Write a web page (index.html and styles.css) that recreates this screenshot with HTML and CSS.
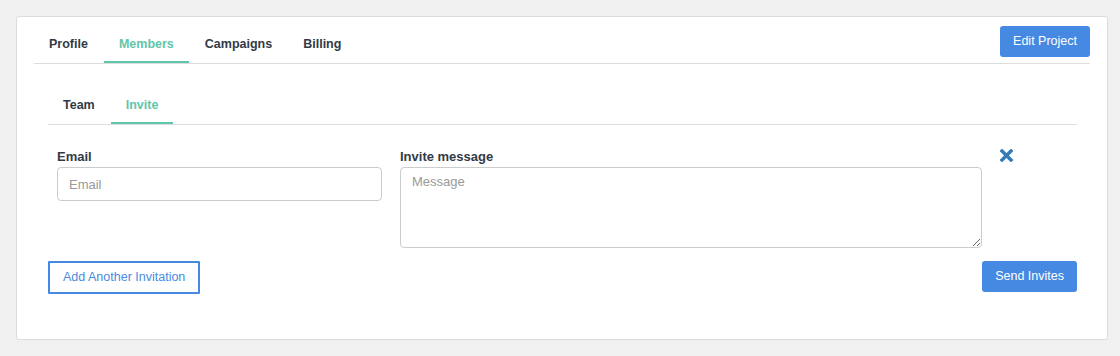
FILE: index.html
```html
<!DOCTYPE html>
<html>
<head>
<title>Project Members</title>
<link rel="stylesheet" href="styles.css">
</head>
<body>

<div class="card">
  <div class="card-head">
    <ul class="tabs">
      <li class="tab">Profile</li>
      <li class="tab active">Members</li>
      <li class="tab">Campaigns</li>
      <li class="tab">Billing</li>
    </ul>
    <button class="btn btn-primary">Edit Project</button>
  </div>

  <div class="section">
    <ul class="tabs sub-tabs">
      <li class="tab">Team</li>
      <li class="tab active">Invite</li>
    </ul>

    <div class="invite-row">
      <div class="field">
        <label for="email">Email</label>
        <input id="email" class="input" type="text" placeholder="Email">
      </div>
      <div class="field">
        <label for="message">Invite message</label>
        <textarea id="message" class="input textarea" placeholder="Message"></textarea>
      </div>
      <a class="remove" href="#" title="Remove">
        <svg width="13" height="13" viewBox="0 0 13 13"><path d="M2 2 L11 11 M11 2 L2 11" stroke="#337ab7" stroke-width="3.4" stroke-linecap="square" fill="none"/></svg>
      </a>
    </div>

    <div class="actions">
      <button class="btn btn-outline">Add Another Invitation</button>
      <button class="btn btn-primary">Send Invites</button>
    </div>
  </div>
</div>

</body>
</html>
```

FILE: styles.css
```css
body {
	margin: 0;
	padding: 16px 12px 16px 16px;
	background: #f0f0f0;
	font-family: "Liberation Sans", Arial, Helvetica, sans-serif;
	color: #333a45;
}

.card {
	background: #ffffff;
	border: 1px solid #dcdcdc;
	border-radius: 3px;
	padding: 9px 17px 45px 17px;
}

.card-head {
	display: flex;
	justify-content: space-between;
	align-items: flex-start;
	border-bottom: 1px solid #dddddd;
}

.tabs {
	display: flex;
	list-style: none;
	margin: 0;
	padding: 0;
}

.tab {
	font-size: 12.5px;
	font-weight: bold;
	line-height: 15px;
	padding: 11px 15px 9px 15px;
	margin-right: 1px;
	border-bottom: 2px solid transparent;
	cursor: pointer;
}

.tab.active {
	color: #5fc6ab;
	border-bottom-color: #5fc6ab;
}

.btn {
	font-family: "Liberation Sans", Arial, Helvetica, sans-serif;
	font-size: 12.5px;
	line-height: 15px;
	border-radius: 3px;
	cursor: pointer;
}

.btn-primary {
	background: #4689e2;
	color: #ffffff;
	border: 0;
	padding: 8px 13px;
}

.btn-outline {
	background: #ffffff;
	color: #4a8ae0;
	border: 2px solid #4689e2;
	border-radius: 1px;
	padding: 7px 13px;
}

.section {
	margin: 23px 13px 0 14px;
}

.sub-tabs {
	border-bottom: 1px solid #dddddd;
}

.invite-row {
	display: grid;
	grid-template-columns: 325px 582px auto;
	column-gap: 18px;
	padding: 24px 0 0 9px;
}

.field label {
	display: block;
	font-size: 13px;
	font-weight: bold;
	line-height: 16px;
	margin-bottom: 2px;
}

.input {
	display: block;
	box-sizing: border-box;
	width: 100%;
	height: 34px;
	border: 1px solid #cccccc;
	border-radius: 4px;
	padding: 6px 11px;
	font-family: "Liberation Sans", Arial, Helvetica, sans-serif;
	font-size: 13px;
	line-height: 20px;
	color: #555555;
}

.input::placeholder {
	color: #999999;
}

.textarea {
	height: 81px;
	padding-top: 4px;
	resize: vertical;
}

.remove {
	display: block;
	width: 13px;
	height: 13px;
	line-height: 0;
}

.actions {
	display: flex;
	justify-content: space-between;
	align-items: flex-start;
	margin-top: 13px;
}
```
